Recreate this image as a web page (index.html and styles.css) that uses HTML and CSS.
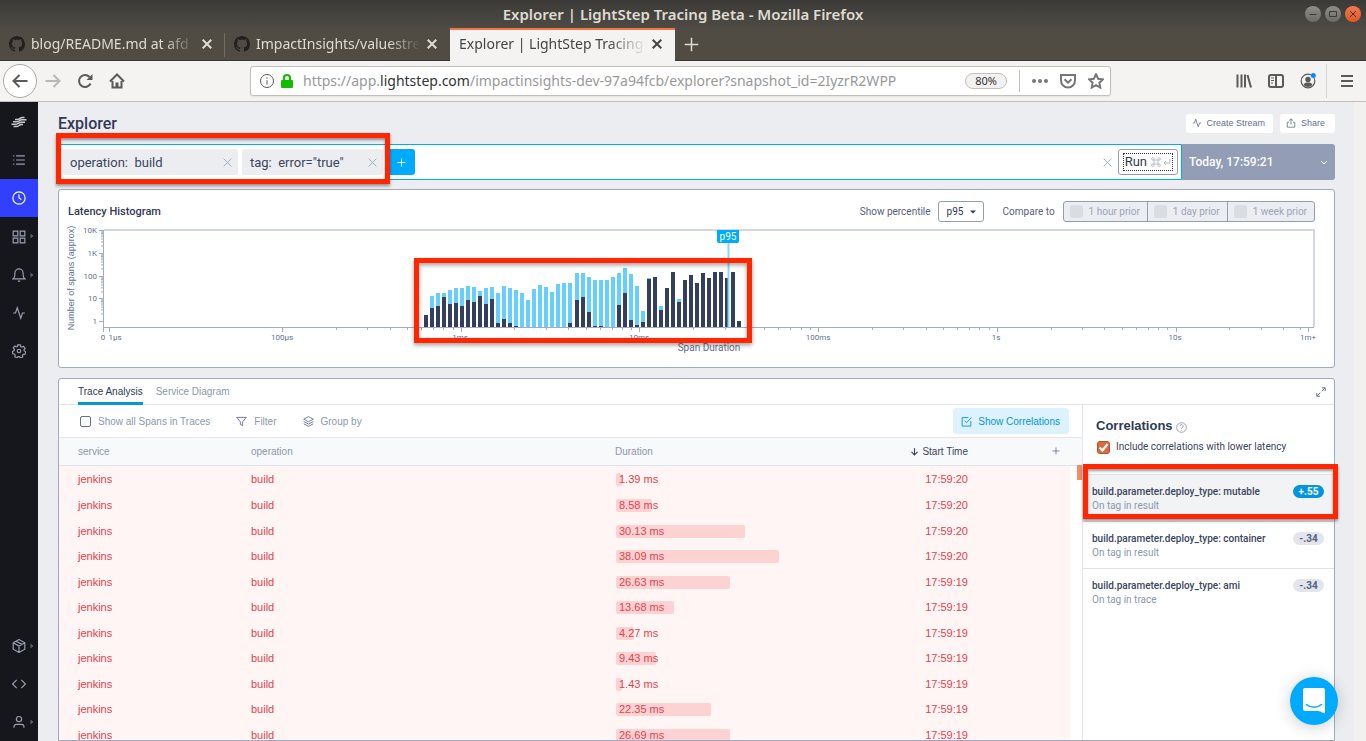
FILE: index.html
```html
<!DOCTYPE html>
<html lang="en">
<head>
<meta charset="utf-8">
<title>Explorer | LightStep Tracing Beta</title>
<link rel="stylesheet" href="styles.css">
</head>
<body>
<svg class="defs" aria-hidden="true">
  <symbol id="github" viewBox="0 0 16 16"><path fill="currentColor" d="M8 0C3.58 0 0 3.58 0 8c0 3.54 2.29 6.53 5.47 7.59.4.07.55-.17.55-.38 0-.19-.01-.82-.01-1.49-2.01.37-2.53-.49-2.69-.94-.09-.23-.48-.94-.82-1.13-.28-.15-.68-.52-.01-.53.63-.01 1.08.58 1.23.82.72 1.21 1.87.87 2.33.66.07-.52.28-.87.51-1.07-1.78-.2-3.64-.89-3.64-3.95 0-.87.31-1.59.82-2.15-.08-.2-.36-1.02.08-2.12 0 0 .67-.21 2.2.82.64-.18 1.32-.27 2-.27s1.36.09 2 .27c1.53-1.04 2.2-.82 2.2-.82.44 1.1.16 1.92.08 2.12.51.56.82 1.27.82 2.15 0 3.07-1.87 3.75-3.65 3.95.29.25.54.73.54 1.48 0 1.07-.01 1.93-.01 2.2 0 .21.15.46.55.38A8.01 8.01 0 0 0 16 8c0-4.42-3.58-8-8-8z"/></symbol>
  <symbol id="cross" viewBox="0 0 10 10"><path d="M0.7 0.7l8.6 8.6M9.3 0.7l-8.6 8.6"/></symbol>
  <symbol id="plus" viewBox="0 0 10 10"><path d="M5 0.5v9M0.5 5h9"/></symbol>
  <symbol id="pulse" viewBox="0 0 24 24"><path d="M22 12h-4l-3 9L9 3l-3 9H2"/></symbol>
  <symbol id="caret" viewBox="0 0 4 6"><path d="M0.5 0.5L3.5 3L0.5 5.5z" fill="#5c6172" stroke="none"/></symbol>
</svg>

<header class="titlebar">
  <span class="window-title">Explorer | LightStep Tracing Beta - Mozilla Firefox</span>
  <div class="window-buttons">
    <button class="win" aria-label="Minimize"><svg viewBox="0 0 16 16"><path d="M4.500 8.500h7"/></svg></button>
    <button class="win" aria-label="Maximize"><svg viewBox="0 0 16 16"><path d="M4.500 5.500h7v5h-7z"/></svg></button>
    <button class="win win-close" aria-label="Close"><svg viewBox="0 0 16 16"><path d="M5 5l6 6M11 5l-6 6"/></svg></button>
  </div>
</header>

<nav class="tabstrip" aria-label="Browser tabs">
  <div class="tab"><svg class="favicon"><use href="#github"/></svg><span class="tab-label">blog/README.md at afd</span><button class="tab-close" aria-label="Close tab"><svg><use href="#cross"/></svg></button></div>
  <div class="tab"><svg class="favicon"><use href="#github"/></svg><span class="tab-label">ImpactInsights/valuestre</span><button class="tab-close" aria-label="Close tab"><svg><use href="#cross"/></svg></button></div>
  <div class="tab tab-active"><span class="tab-label">Explorer | LightStep Tracing</span><button class="tab-close" aria-label="Close tab"><svg><use href="#cross"/></svg></button></div>
  <button class="new-tab" aria-label="New tab"><svg><use href="#plus"/></svg></button>
</nav>

<div class="toolbar">
  <div class="nav-buttons">
    <button class="back" aria-label="Back"><svg viewBox="0 0 16 16"><path d="M15.500 8H1.500M7.500 2L1.500 8l6 6"/></svg></button>
    <button class="nav-icon forward" aria-label="Forward"><svg viewBox="0 0 16 16"><path d="M0.500 8h14M8.500 2l6 6-6 6"/></svg></button>
    <button class="nav-icon" aria-label="Reload"><svg viewBox="0 0 16 16"><path d="M13.500 10.500A6 6 0 1 1 12.500 4"/><path d="M15.500 1v6h-6z" fill="currentColor" stroke="none"/></svg></button>
    <button class="nav-icon" aria-label="Home"><svg viewBox="0 0 16 16"><path d="M1 8.500L8 1.500l7 7M3.500 8v6.500h9V8"/><path d="M6.500 9.500h3v5h-3z" fill="currentColor" stroke="none"/></svg></button>
  </div>
  <div class="urlbar">
    <svg class="info" viewBox="0 0 16 16"><circle cx="8" cy="8" r="6.500"/><path d="M8 7.200v4.300M8 4.300v1.500"/></svg>
    <svg class="lock" viewBox="0 0 14 16"><path d="M4 8V5a3 3 0 0 1 6 0v3" fill="none" stroke="#12bc00" stroke-width="2.200"/><rect x="1" y="7" width="12" height="8" rx="1" fill="#12bc00"/></svg>
    <div class="url" role="textbox" contenteditable="true" spellcheck="false" aria-label="Address">https://app.<b>lightstep.com</b>/impactinsights-dev-97a94fcb/explorer?snapshot_id=2IyzrR2WPP</div>
    <button class="zoom-level">80%</button>
    <div class="url-actions">
      <button class="nav-icon" aria-label="Page actions"><svg viewBox="0 0 16 16"><g fill="currentColor" stroke="none"><circle cx="2" cy="8" r="2"/><circle cx="8" cy="8" r="2"/><circle cx="14" cy="8" r="2"/></g></svg></button>
      <button class="nav-icon" aria-label="Pocket"><svg viewBox="0 0 16 16"><path d="M1 2h14v5.500a7 7 0 0 1-14 0zM4.500 6.300L8 9.700l3.500-3.400"/></svg></button>
      <button class="nav-icon" aria-label="Bookmark"><svg viewBox="0 0 16 16"><path d="M8 1.200l2.100 4.500 4.900.6-3.600 3.400.9 4.900L8 12.200l-4.300 2.400.9-4.900L1 6.300l4.900-.6z"/></svg></button>
    </div>
  </div>
  <div class="app-buttons">
    <button class="nav-icon" aria-label="Library"><svg viewBox="0 0 16 16"><path d="M1.500 1.500v13M5.500 1.500v13M9 1.500v13M11.500 2l3.500 12.500"/></svg></button>
    <button class="nav-icon" aria-label="Sidebar"><svg viewBox="0 0 16 16"><rect x="1" y="2" width="14" height="12" rx="2"/><path d="M8 2v12"/><path d="M3 5h3M3 7.500h3M3 10h2" stroke-width="1"/></svg></button>
    <button class="nav-icon" aria-label="Account"><svg viewBox="0 0 16 16"><circle cx="8" cy="8" r="6.800" stroke-width="1.200"/><circle cx="8" cy="6.500" r="2.700" fill="currentColor" stroke="none"/><path d="M3.500 12c.8-2 2.200-2.500 4.500-2.500s3.700.5 4.500 2.500a6 6 0 0 1-9 0z" fill="currentColor" stroke="none"/><circle cx="13.300" cy="2.500" r="2.700" fill="#0a84ff" stroke="#f4f3f1" stroke-width=".4"/></svg></button>
    <button class="nav-icon menu" aria-label="Menu"><svg viewBox="0 0 16 16"><path d="M2 3h12M2 8h12M2 13h12"/></svg></button>
  </div>
</div>

<div class="app">
  <nav class="sidebar" aria-label="Main">
    <a class="side side-tall logo" href="#" aria-label="LightStep"><svg viewBox="0 0 16 12"><path d="M4 3.500h2.500c2 0 2.500-2 5-2h2M2 5.800h3.500c2.500 0 3-2 5.500-2h4.500M.5 8.200H5c2.500 0 3-2 5.500-2H14M2.500 10.500h3c2.500 0 2.500-2 5-2h1.500"/></svg></a>
    <a class="side" href="#" aria-label="Services"><svg viewBox="0 0 24 24"><path d="M7 5h15M7 12h15M7 19h15M2 5h2M2 12h2M2 19h2"/></svg></a>
    <a class="side side-active" href="#" aria-label="Explorer"><svg viewBox="0 0 24 24"><circle cx="12" cy="12" r="10.500"/><path d="M12 5.500V12l4 2.500"/></svg></a>
    <a class="side side-tall" href="#" aria-label="Dashboards"><svg viewBox="0 0 24 24"><path d="M2 2h8v8H2zM14 2h8v8h-8zM14 14h8v8h-8zM2 14h8v8H2z"/></svg><svg class="caret"><use href="#caret"/></svg></a>
    <a class="side" href="#" aria-label="Alerts"><svg viewBox="0 0 24 24"><path d="M19 8.500a7 7 0 0 0-14 0c0 8-3 10-3 10h20s-3-2-3-10M10 22.500h4"/></svg><svg class="caret"><use href="#caret"/></svg></a>
    <a class="side" href="#" aria-label="Streams"><svg><use href="#pulse"/></svg></a>
    <a class="side" href="#" aria-label="Settings"><svg viewBox="0 0 24 24"><circle cx="12" cy="12" r="3"/><path d="M9.800 1.500h4.400l.7 3 1.900.9 2.800-1.500 2.900 3.600-2 2.400.4 2 2.700 1.500-1.200 4.200-3.200.1-1.300 1.600.5 3-4 1.700-1.500-2.300-2.300-.1-2 2.200-3.800-2 .7-3-1.300-1.700-3-.3L1 12.900l2.600-1.600.5-2.100-1.900-2.500L5.100 3.600 7.700 5l1.700-.8z"/></svg></a>
    <div class="side-spacer"></div>
    <a class="side" href="#" aria-label="Packages"><svg viewBox="0 0 24 24"><path d="M12 1L2 6.500v11L12 23l10-5.500v-11zM2 6.500L12 12l10-5.500M12 12v11M7 3.700l10 5.500"/></svg><svg class="caret"><use href="#caret"/></svg></a>
    <a class="side" href="#" aria-label="Developer"><svg viewBox="0 0 24 24"><path d="M16 5l7 7-7 7M8 5l-7 7 7 7"/></svg></a>
    <a class="side" href="#" aria-label="Account"><svg viewBox="0 0 24 24"><circle cx="12" cy="7" r="4.500"/><path d="M3.500 22v-2a4 4 0 0 1 4-4h9a4 4 0 0 1 4 4v2"/></svg><svg class="caret"><use href="#caret"/></svg></a>
  </nav>

  <main class="page">
    <div class="page-head">
      <h1>Explorer</h1>
      <button class="chip-button"><svg><use href="#pulse"/></svg>Create Stream</button>
      <button class="chip-button share"><svg viewBox="0 0 24 24"><path d="M7 10H3v12h18V10h-4M12 16V2M7 6.500L12 2l5 4.500"/></svg>Share</button>
    </div>

    <div class="query-row">
      <div class="query">
        <div class="filter filter-op"><span>operation:&nbsp; build</span><button aria-label="Remove operation"><svg><use href="#cross"/></svg></button></div>
        <div class="filter filter-tag"><span>tag:&nbsp; error="true"</span><button aria-label="Remove tag"><svg><use href="#cross"/></svg></button></div>
        <button class="add" aria-label="Add filter"><svg><use href="#plus"/></svg></button>
        <input class="query-input" type="text" aria-label="Query">
        <button class="clear" aria-label="Clear query"><svg><use href="#cross"/></svg></button>
        <button class="run"><span>Run <svg viewBox="0 0 20 10"><path d="M3 3h4v4H3zM3 3H2a1.200 1.200 0 1 1 1-1.200zM7 3V1.800A1.200 1.200 0 1 1 8 3zM3 7v1.200A1.200 1.200 0 1 1 2 7zM7 7h1a1.200 1.200 0 1 1-1 1.200zM19 2v4h-6M15 4l-2 2 2 2"/></svg></span></button>
        <div class="callout"></div>
      </div>
      <button class="date">Today, 17:59:21<svg viewBox="0 0 8 5"><path d="M1 1l3 3 3-3"/></svg></button>
    </div>

    <section class="panel histogram">
      <div class="histogram-head">
        <h2>Latency Histogram</h2>
        <label for="percentile">Show percentile</label>
        <div class="select"><select id="percentile"><option>p95</option></select><svg viewBox="0 0 6 4"><path d="M0 .5h6L3 3.500z"/></svg></div>
        <span class="compare-label" id="compare">Compare to</span>
        <div class="segments" role="group" aria-labelledby="compare">
          <label><input type="checkbox" disabled>1 hour prior</label>
          <label><input type="checkbox" disabled>1 day prior</label>
          <label><input type="checkbox" disabled>1 week prior</label>
        </div>
      </div>
      <svg class="chart" id="chart" viewBox="0 0 1275 145" role="img" aria-label="Latency histogram"></svg>
    </section>

    <section class="panel traces">
      <div class="view-tabs">
        <button class="view-tab view-tab-active">Trace Analysis</button>
        <button class="view-tab">Service Diagram</button>
        <button class="expand" aria-label="Expand"><svg viewBox="0 0 10 10"><path d="M6 .8h3.200V4M9.200.8L5.800 4.200M.8 6v3.200H4M.8 9.200l3.400-3.400"/></svg></button>
      </div>
      <div class="trace-body">
        <div class="trace-main">
          <div class="trace-tools">
            <label class="tool"><input type="checkbox">Show all Spans in Traces</label>
            <button class="tool"><svg viewBox="0 0 24 24"><path d="M1.500 3h21L14.500 12.500v8.500l-5-2.500v-6z"/></svg>Filter</button>
            <button class="tool"><svg viewBox="0 0 24 24"><path d="M12 1.500L1.500 7 12 12.500 22.500 7zM1.500 12L12 17.500 22.500 12M1.500 17L12 22.500 22.500 17"/></svg>Group by</button>
            <button class="correlate" aria-pressed="true"><svg viewBox="0 0 24 24"><path d="M21.500 11v11h-19V3.500H16M8 10.500l4 4L22.500 3.500"/></svg>Show Correlations</button>
          </div>
          <table class="spans">
            <colgroup><col class="c-service"><col class="c-operation"><col><col class="c-time"><col class="c-add"><col class="c-gutter"></colgroup>
            <thead><tr><th>service</th><th>operation</th><th>Duration</th><th class="time sorted"><svg viewBox="0 0 24 24"><path d="M12 3v18M4 13l8 8 8-8"/></svg>Start Time</th><th class="add-col"><button aria-label="Add column"><svg><use href="#plus"/></svg></button></th><th></th></tr></thead>
            <tbody>
              <tr><td>jenkins</td><td>build</td><td><div class="dur"><i style="width:6px"></i><span>1.39 ms</span></div></td><td class="time">17:59:20</td><td></td><td class="gutter"></td></tr>
              <tr><td>jenkins</td><td>build</td><td><div class="dur"><i style="width:36px"></i><span>8.58 ms</span></div></td><td class="time">17:59:20</td><td></td><td class="gutter"></td></tr>
              <tr><td>jenkins</td><td>build</td><td><div class="dur"><i style="width:129px"></i><span>30.13 ms</span></div></td><td class="time">17:59:20</td><td></td><td class="gutter"></td></tr>
              <tr><td>jenkins</td><td>build</td><td><div class="dur"><i style="width:163px"></i><span>38.09 ms</span></div></td><td class="time">17:59:20</td><td></td><td class="gutter"></td></tr>
              <tr><td>jenkins</td><td>build</td><td><div class="dur"><i style="width:114px"></i><span>26.63 ms</span></div></td><td class="time">17:59:19</td><td></td><td class="gutter"></td></tr>
              <tr><td>jenkins</td><td>build</td><td><div class="dur"><i style="width:58px"></i><span>13.68 ms</span></div></td><td class="time">17:59:19</td><td></td><td class="gutter"></td></tr>
              <tr><td>jenkins</td><td>build</td><td><div class="dur"><i style="width:18px"></i><span>4.27 ms</span></div></td><td class="time">17:59:19</td><td></td><td class="gutter"></td></tr>
              <tr><td>jenkins</td><td>build</td><td><div class="dur"><i style="width:40px"></i><span>9.43 ms</span></div></td><td class="time">17:59:19</td><td></td><td class="gutter"></td></tr>
              <tr><td>jenkins</td><td>build</td><td><div class="dur"><i style="width:6px"></i><span>1.43 ms</span></div></td><td class="time">17:59:19</td><td></td><td class="gutter"></td></tr>
              <tr><td>jenkins</td><td>build</td><td><div class="dur"><i style="width:95px"></i><span>22.35 ms</span></div></td><td class="time">17:59:19</td><td></td><td class="gutter"></td></tr>
              <tr><td>jenkins</td><td>build</td><td><div class="dur"><i style="width:114px"></i><span>26.69 ms</span></div></td><td class="time">17:59:19</td><td></td><td class="gutter"></td></tr>
            </tbody>
          </table>
          <div class="scroll-thumb"></div>
        </div>
        <aside class="correlations">
          <h3>Correlations <svg viewBox="0 0 24 24"><circle cx="12" cy="12" r="10.500"/><path d="M8.500 9a3.500 3.500 0 1 1 5 3.200c-1 .6-1.500 1-1.500 2.300M12 17v2"/></svg></h3>
          <label class="include"><span class="check"><input type="checkbox" checked><svg viewBox="0 0 12 12"><path d="M2.500 6l2.500 2.800 4.800-6"/></svg></span>Include correlations with lower latency</label>
          <ul>
            <li class="selected"><div><strong>build.parameter.deploy_type: mutable</strong><p>On tag in result</p></div><span class="score">+.55</span><div class="callout"></div></li>
            <li><div><strong>build.parameter.deploy_type: container</strong><p>On tag in result</p></div><span class="score">-.34</span></li>
            <li><div><strong>build.parameter.deploy_type: ami</strong><p>On tag in trace</p></div><span class="score">-.34</span></li>
          </ul>
        </aside>
      </div>
    </section>
  </main>
  <button class="chat" aria-label="Open chat"><svg viewBox="0 0 24 28"><path d="M3 1h18a2 2 0 0 1 2 2v23.500L16.500 24H3a2 2 0 0 1-2-2V3a2 2 0 0 1 2-2z" fill="#fff"/><path d="M4.500 17.500c4.500 3.700 10.500 3.700 15 0" fill="none" stroke="#0af" stroke-width="1.500" stroke-linecap="round"/></svg></button>
</div>
<script src="chart.js"></script>
</body>
</html>
```

FILE: styles.css
```css
* { box-sizing: border-box; }
body {
  margin: 0;
  height: 100vh;
  display: flex;
  flex-direction: column;
  overflow: hidden;
  font-family: "Liberation Sans", Arial, sans-serif;
  font-size: 10px;
  color: #2f3a56;
}
button { font: inherit; color: inherit; background: none; border: 0; padding: 0; display: flex; align-items: center; }
svg { display: block; flex: none; fill: none; stroke: currentColor; stroke-width: 2; }
h1, h2, h3, p, ul { margin: 0; padding: 0; list-style: none; }
input { margin: 0; }
.defs { position: absolute; width: 0; height: 0; }

/* Browser window */
.titlebar, .tabstrip, .toolbar { flex: none; font-family: "Noto Sans", sans-serif; }
.titlebar {
  height: 28px;
  display: grid;
  grid-template-columns: 1fr auto 1fr;
  align-items: center;
  background: linear-gradient(#3b3a36, #4e4b44);
  color: #dfdbd2;
}
.window-title { grid-column: 2; font-size: 15px; line-height: 20px; font-weight: 600; }
.window-buttons { display: flex; justify-content: flex-end; gap: 4px; padding-right: 5px; }
.win { width: 16px; height: 16px; border-radius: 50%; background: linear-gradient(#8f8d86, #6d6b65); color: #3b3a36; }
.win svg { width: 16px; height: 16px; stroke-width: 1; }
.win-close { background: linear-gradient(#f4794e, #e2571f); }

.tabstrip { height: 33px; display: flex; background: #504c44; border-bottom: 1px solid #393733; color: #dfdbd2; }
.tab { width: 225px; display: flex; align-items: center; gap: 6px; padding: 0 13px 0 9px; position: relative; }
.tab + .tab::before { content: ""; position: absolute; left: -1px; top: 5px; width: 1px; height: 24px; background: #716e66; }
.favicon { width: 16px; height: 16px; color: #23211f; stroke: none; }
.tab-label {
  flex: 1; min-width: 0; overflow: hidden; white-space: nowrap;
  font-size: 14px; line-height: 22px;
  -webkit-mask-image: linear-gradient(to right, #000 80%, transparent);
  mask-image: linear-gradient(to right, #000 80%, transparent);
}
.tab-close svg { width: 10px; height: 10px; }
.tab-active { background: #f4f3f1; border-top: 2px solid #f37748; color: #444; margin-bottom: -1px; padding-bottom: 3px; }
.tab.tab-active::before { display: none; }
.new-tab { padding: 0 9px; }
.new-tab svg { width: 15px; height: 15px; stroke-width: 1; }

.toolbar { height: 41px; display: flex; align-items: center; background: #f4f3f1; border-bottom: 1px solid #c3c0bc; color: #5a5a58; }
.nav-buttons { width: 250px; display: flex; align-items: center; gap: 16px; padding-left: 3px; }
.back { width: 34px; height: 34px; border: 1px solid #aaa; border-radius: 50%; background: #fff; justify-content: center; }
.back svg, .nav-icon svg { width: 16px; height: 16px; stroke-width: 2; }
.back + .nav-icon { margin-left: -8px; }
.forward { color: #b9b8b6; }
.urlbar { flex: 1; height: 30px; display: flex; align-items: center; background: #fff; border: 1px solid #c3c0bc; border-radius: 3px; padding: 0 6px 0 8px; box-shadow: 0 1px 2px #0001; }
.info { width: 16px; height: 16px; stroke-width: 1; }
.lock { width: 14px; height: 16px; margin: 0 9px 0 5px; stroke: none; }
.url { flex: 1; font-size: 14px; line-height: 22px; color: #999; white-space: nowrap; overflow: hidden; }
.url b { font-weight: 400; color: #333; }
.zoom-level { height: 16px; padding: 0 9px; border: 1px solid #c3c0bc; border-radius: 8px; background: #f2f2f2; font-size: 11px; line-height: 14px; color: #333; }
.url-actions { display: flex; gap: 12px; align-items: center; margin-left: 12px; padding-left: 12px; height: 22px; border-left: 1px solid #c3c0bc; color: #777; }
.app-buttons { flex: none; width: 255px; display: flex; justify-content: flex-end; align-items: center; gap: 16px; padding-right: 11px; }
.menu { height: 34px; border-left: 1px solid #d5d3d0; padding-left: 12px; margin-left: -6px; }

/* Application */
.app { flex: 1; min-height: 0; display: flex; background: #ecedf1; border-right: 12px solid #f2f1f0; position: relative; }
.sidebar { width: 38px; flex: none; display: flex; flex-direction: column; background: #16171c; }
.side { height: 38px; flex: none; display: flex; align-items: center; justify-content: center; color: #9aa0b2; position: relative; }
.side-tall { height: 39px; }
.side svg { width: 14px; height: 14px; }
.logo { color: #c4c6cc; }
.logo svg { width: 16px; height: 12px; stroke-width: 1.5; }
.side-active { background: #3140ff; color: #fff; }
.side .caret { position: absolute; right: 4px; top: 16px; width: 4px; height: 6px; }
.side-spacer { flex: 1; }
.page { flex: 1; min-width: 0; display: flex; flex-direction: column; padding: 0 19px 0 20px; }
.page-head { height: 42px; flex: none; display: flex; align-items: center; gap: 7px; }
h1 { flex: 1; font: 500 16px/20px Roboto, sans-serif; padding-top: 1px; }
.chip-button { height: 19px; padding: 0 8px 0 6px; gap: 4px; background: #fff; border-radius: 3px; color: #66718f; font-size: 9px; }
.chip-button svg { width: 10px; height: 10px; }
.share { padding-right: 10px; gap: 5px; }

.query-row { flex: none; height: 36px; display: flex; font-family: Roboto, sans-serif; font-size: 13px; }
.query { flex: 1; min-width: 0; display: flex; align-items: center; padding: 4px 3px 4px 4px; gap: 4px; background: #fff; border: 1px solid #0af; border-radius: 3px 0 0 3px; position: relative; }
.filter { height: 26px; display: flex; align-items: center; justify-content: space-between; background: #ecedf1; border-radius: 3px; padding: 0 6px 0 7px; color: #3a4560; white-space: nowrap; }
.filter-op { width: 175px; }
.filter-tag { width: 141px; padding-left: 8px; }
.filter svg, .clear svg { width: 9px; height: 9px; color: #9aa8bd; stroke-width: 1; }
.add { width: 28px; height: 26px; justify-content: center; background: #0af; border-radius: 3px; color: #fff; }
.add svg { width: 9px; height: 9px; stroke-width: 1; }
.query-input { flex: 1; min-width: 0; border: 0; outline: 0; height: 26px; font: inherit; }
.run { height: 26px; margin-left: 2px; padding: 5px; border: 1px solid #939db6; border-radius: 3px; font-size: 13px; line-height: 16px; }
.run span { display: flex; align-items: center; gap: 4px; padding: 0 1px; outline: 1px dotted #333; }
.run svg { width: 20px; height: 10px; color: #b5bccb; stroke-width: 1; }
.date { width: 153px; padding: 0 7px; justify-content: space-between; background: #939db6; color: #fff; border-radius: 0 3px 3px 0; font-size: 12px; font-weight: 500; }
.date svg { width: 8px; height: 5px; stroke-width: 1; }
.callout { position: absolute; border: 5px solid #ff2600; box-shadow: 0 2px 3px #0006, inset 0 2px 3px #0006; pointer-events: none; z-index: 2; }
.query .callout { left: -3px; top: -12px; width: 334px; height: 51px; }

.panel { background: #fff; border: 1px solid #9faac0; border-radius: 3px; }
.histogram { flex: none; margin: 9px 0 10px; }
.histogram-head { display: flex; align-items: center; padding: 11px 19px 0 9px; font-family: Roboto, sans-serif; color: #55617f; }
h2 { flex: 1; font: 500 11px/20px Roboto, sans-serif; color: #2f3a56; }
.select { position: relative; margin: 0 19px 0 7px; }
.select select { display: block; appearance: none; width: 46px; height: 21px; padding: 0 8px; border: 1px solid #939db6; border-radius: 3px; background: #fff; font: 10px Roboto, sans-serif; color: #2f3a56; }
.select svg { position: absolute; right: 8px; top: 9px; width: 6px; height: 4px; fill: #2f3a56; stroke: none; pointer-events: none; }
.compare-label { margin-right: 8px; }
.segments { display: flex; height: 21px; border: 1px solid #939db6; border-radius: 3px; background: #ecedf1; color: #9ba4ba; }
.segments label { display: flex; align-items: center; gap: 6px; padding: 0 7px 0 6px; }
.segments label + label { border-left: 1px solid #939db6; }
.segments input { appearance: none; width: 13px; height: 13px; border-radius: 3px; background: #d9dce1; }
.chart { width: 100%; height: auto; overflow: visible; stroke: none; font: 8px Roboto, sans-serif; }
.chart text { fill: #65708f; }
.chart .axis-title { font-size: 10px; }
.chart .y-title { font: 9px "Liberation Sans", sans-serif; }
.chart .marker { fill: #fff; font-size: 10px; }
.chart .frame { fill: none; stroke: #d3d7e2; stroke-width: 2; }
.chart .axis { fill: none; stroke: #a3adc2; stroke-width: 1; }
.chart .mark { fill: none; stroke: #ff2600; stroke-width: 5; filter: drop-shadow(0 2px 2px #0006); }

.traces { flex: 1; min-height: 0; display: flex; flex-direction: column; border-radius: 3px 3px 0 0; overflow: visible; }
.view-tabs { height: 26px; flex: none; display: flex; gap: 13px; padding: 0 8px 0 19px; border-bottom: 1px solid #e3e5eb; color: #8d97ae; }
.view-tab { height: 26px; border-bottom: 3px solid transparent; padding-top: 2px; }
.view-tab-active { color: #2f3a56; border-color: #0096e0; }
.expand { margin-left: auto; color: #66718f; }
.expand svg { width: 10px; height: 10px; stroke-width: 1; }
.trace-body { flex: 1; min-height: 0; display: flex; }
.trace-main { flex: 1; min-width: 0; overflow: hidden; position: relative; }
.trace-tools { height: 33px; display: flex; align-items: center; gap: 26px; padding: 0 13px 0 21px; border-bottom: 1px solid #e3e5eb; color: #8d97ae; }
.tool { display: flex; align-items: center; gap: 7px; }
.tool svg { width: 11px; height: 11px; color: #66718f; }
.tool input { appearance: none; width: 11px; height: 11px; border: 1px solid #66718f; border-radius: 2px; }
.correlate { height: 26px; margin-left: auto; gap: 6px; padding: 0 9px 0 8px; background: #def2fd; border-radius: 3px; color: #0096e0; }
.correlate svg { width: 11px; height: 11px; }

.spans { width: 100%; table-layout: fixed; border-collapse: collapse; }
.c-service { width: 192px; }
.c-operation { width: 364px; }
.c-time { width: 126px; }
.c-add { width: 102px; }
.c-gutter { width: 12px; }
.spans th { height: 27px; padding: 0; background: #f7f9fb; border-bottom: 1px solid #dfe2ea; text-align: left; font-weight: 400; font-size: 10px; color: #8d97ae; }
.spans th:first-child, .spans td:first-child { padding-left: 19px; }
.spans .time { text-align: right; }
.spans .sorted { color: #3a4560; }
.sorted svg { display: inline-block; width: 9px; height: 9px; margin-right: 3px; vertical-align: -1px; stroke-width: 3; }
.add-col button { margin-left: auto; padding-right: 10px; color: #66718f; }
.add-col svg { width: 8px; height: 8px; stroke-width: 1; }
.spans td { height: 26px; padding: 2px 0 0; background: #fff5f4; font-size: 11px; line-height: 13px; color: #e0444d; }
.spans tr:nth-child(2n + 4) td { height: 25px; }
.spans .gutter { background: #fff; }
.dur { position: relative; height: 13px; padding-left: 4px; }
.dur i { position: absolute; left: 1px; top: 0; height: 13px; border-radius: 2px; background: #fdd2d3; }
.dur span { position: relative; }
.scroll-thumb { position: absolute; right: 0; top: 60px; width: 5px; height: 15px; background: #f28d67; }

.correlations { width: 252px; flex: none; border-left: 1px solid #e3e5eb; color: #3a4560; }
h3 { display: flex; align-items: center; gap: 3px; padding: 12px 0 0 13px; font-size: 13px; line-height: 18px; color: #2f3a56; }
h3 svg { width: 11px; height: 11px; margin-top: 3px; color: #939db6; }
.include { display: flex; align-items: center; gap: 6px; height: 24px; padding-left: 14px; font: 10px/14px Roboto, sans-serif; }
.check { display: grid; }
.check > * { grid-area: 1 / 1; width: 13px; height: 13px; }
.check input { appearance: none; border: 1px solid #b5532c; border-radius: 3px; background: #dd6a3c; }
.check svg { color: #fff; z-index: 1; pointer-events: none; }
.correlations ul { margin-top: 15px; font: 10px/14px Roboto, sans-serif; }
.correlations li { display: flex; justify-content: space-between; align-items: flex-start; height: 47px; padding: 10px 10px 0 9px; border-bottom: 1px solid #dfe2ea; position: relative; color: #8d97ae; }
.correlations li:last-child { border-bottom: 0; }
.correlations strong { display: block; font-weight: 500; font-size: 10px; color: #3a4560; }
.correlations .selected { height: 48px; background: #f1f3f5; border-top: 1px solid #dfe2ea; }
.score { min-width: 31px; height: 13px; border-radius: 7px; background: #e2e5ec; color: #55617f; font-weight: 700; line-height: 13px; text-align: center; }
.selected .score { background: #0096e0; color: #fff; }
.correlations .callout { left: 0; right: -4px; top: -11px; height: 55px; }
.chat { position: absolute; right: 16px; bottom: 16px; width: 48px; height: 48px; border-radius: 50%; justify-content: center; background: #0af; box-shadow: 0 2px 16px #0003; z-index: 3; }
.chat svg { width: 24px; height: 28px; stroke: none; }
```

FILE: chart.js
```js
const chart = document.getElementById("chart");
const LEFT = 45, RIGHT = 1255, TOP = 8, BASE = 105;

function add(name, attrs, text) {
  const node = document.createElementNS("http://www.w3.org/2000/svg", name);
  for (const key in attrs) node.setAttribute(key, attrs[key]);
  if (text) node.textContent = text;
  chart.appendChild(node);
  return node;
}

add("path", { class: "frame", d: `M${LEFT} ${TOP}H${RIGHT}V${BASE}` });
add("path", { class: "axis", d: `M${LEFT - .5} ${TOP}V${BASE + .5}H${RIGHT}` });

/* Span counts: five decades on a log scale */
["10K", "1K", "100", "10", "1"].forEach((label, i) => {
  const y = Math.round(TOP + i * 22.8);
  let d = `M${LEFT - 5} ${y + .5}h5`;
  if (i < 4) for (let n = 2; n < 10; n++) d += `M${LEFT - 3} ${(y + 22.8 * (1 - Math.log10(n))).toFixed(1)}h3`;
  add("path", { class: "axis", d });
  add("text", { x: LEFT - 7, y: y + 3, "text-anchor": "end" }, label);
});

/* Durations: one decade every 178.7 units, starting from 100µs */
const decade = 178.7, start = 223.5;
let ticks = `M${LEFT - .5} ${BASE}v5M50.500 ${BASE}v5M1249.500 ${BASE}v5`;
for (let k = 0; k < 6; k++) {
  for (let n = 1; n < 10; n++) {
    const x = start + decade * (k + Math.log10(n));
    if (x < 1249) ticks += `M${Math.floor(x) + .5} ${BASE}v${n === 1 ? 5 : 3}`;
  }
}
add("path", { class: "axis", d: ticks });
[["0", 44], ["1µs", 56], ["100µs", 223], ["1ms", 401], ["10ms", 580], ["100ms", 759], ["1s", 937], ["10s", 1116], ["1m+", 1249]]
  .forEach(([label, x]) => add("text", { x, y: 118, "text-anchor": "middle" }, label));

/* [all spans, matching spans] heights */
const bars = [[0,12],[31,19],[34,21],[34,30],[37,23],[39,24],[39,21],[41,27],[40,25],[36,31],[39,23],[40,28],
  [34,4],[41,8],[39,4],[37,1],[34,0],[27,0],[38,0],[42,0],[40,0],[35,0],[43,0],[44,0],[44,4],[54,27],[54,30],
  [50,15],[47,1],[47,1],[47,0],[50,0],[54,22],[59,34],[53,7],[41,2],[16,5],[49,48],[0,50],[21,17],[0,39],
  [0,55],[28,25],[0,47],[0,52],[0,44],[0,54],[0,49],[0,55],[0,55],[0,49],[0,55],[0,6]];
bars.forEach(([all, match], i) => {
  const x = Math.round(365 + i * 6.02);
  if (all) add("rect", { x, y: BASE - all, width: 4, height: all, fill: "#66cfff" });
  if (match) add("rect", { x, y: BASE - match, width: 4, height: match, fill: "#343f5c" });
});

add("path", { d: `M669.500 ${TOP}V${BASE}`, stroke: "#8bd6ff" });
add("path", { d: "M658 8h22v11a2 2 0 0 1-2 2h-18a2 2 0 0 1-2-2z", fill: "#00aaff" });
add("text", { class: "marker", x: 669, y: 18, "text-anchor": "middle" }, "p95");
add("text", { class: "axis-title", x: 650, y: 129, "text-anchor": "middle" }, "Span Duration");
add("text", { class: "y-title", transform: "translate(15 56) rotate(-90)", "text-anchor": "middle" }, "Number of spans (approx)");
add("rect", { class: "mark", x: 357.5, y: 38.5, width: 333, height: 80 });
```
